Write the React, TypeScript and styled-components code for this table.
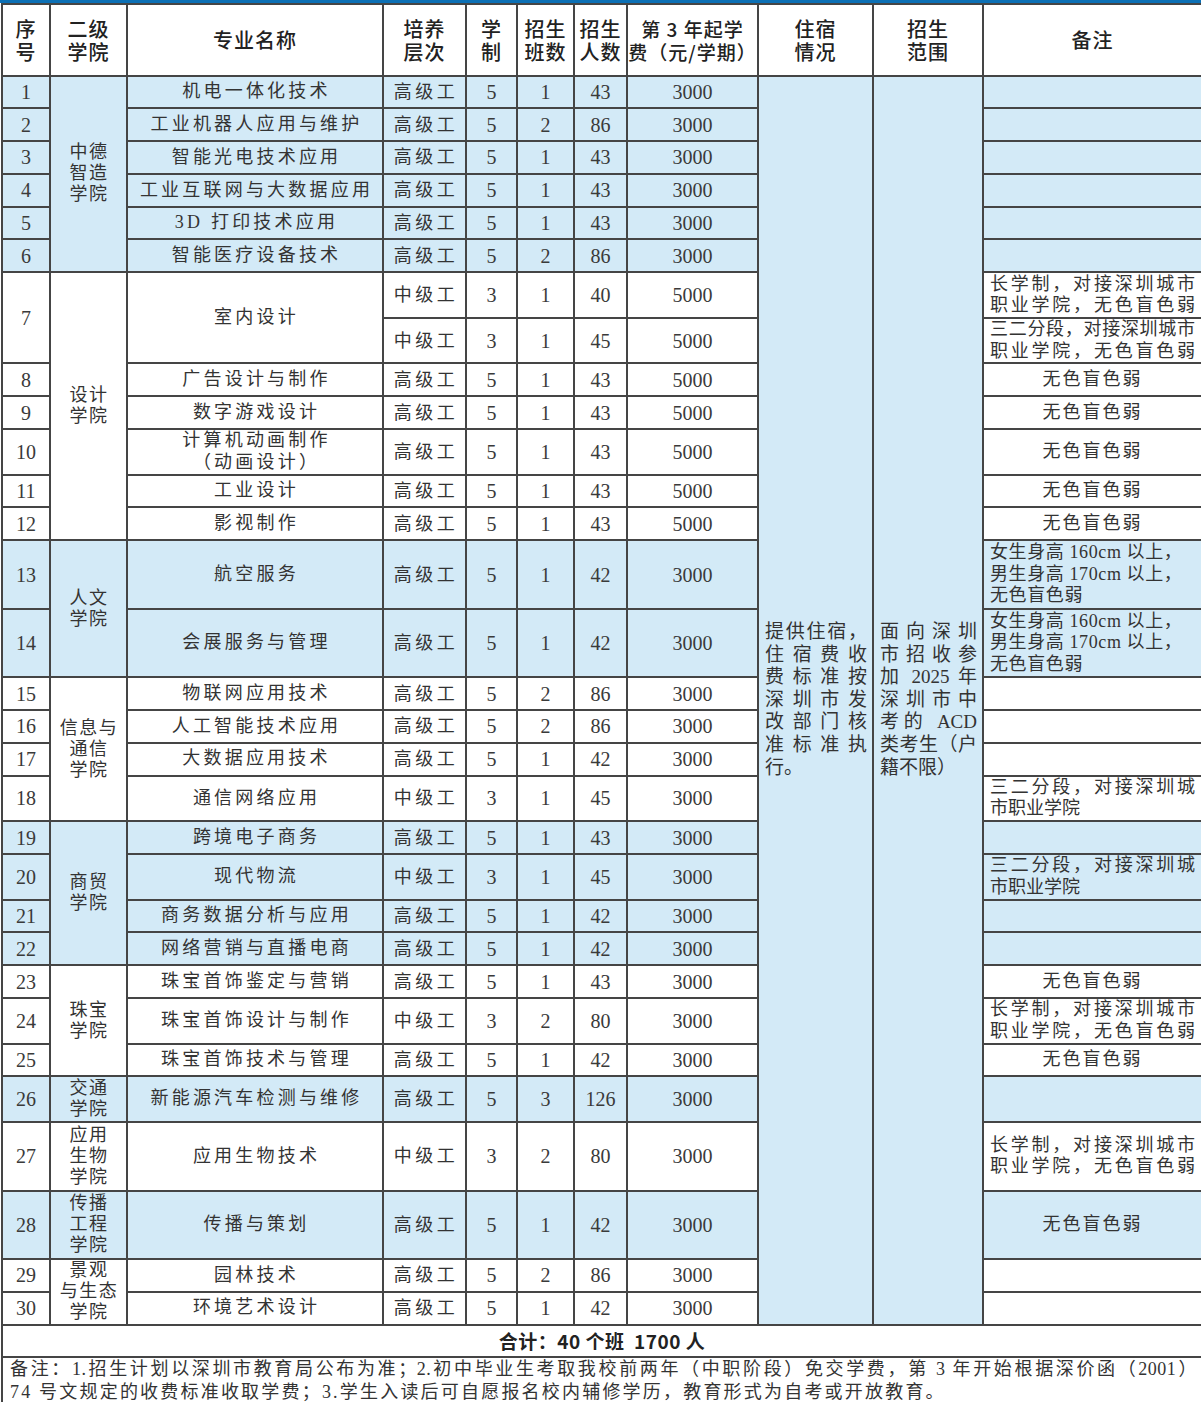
import React from "react";
import styled, { createGlobalStyle } from "styled-components";

const BLUE = "#d3eaf7";
const LINE = "#454545";
const BODY_FONT = `"Liberation Serif", "Noto Sans CJK SC", serif`;
const HEAD_FONT = `"Noto Sans CJK SC", "Noto Sans", sans-serif`;

// 行高
const A = 32.8;
const B = 45.6;
const C = 68.5;

type NoteMode = "center" | "justify" | "left";

type Row = {
  no?: string;
  noSpan?: number;
  name?: string[];
  level: string;
  years: string;
  classes: string;
  people: string;
  fee: string;
  note?: string[];
  noteMode?: NoteMode;
  h: number;
  blue: boolean;
  college?: { lines: string[]; span: number };
};

const NONE = "无色盲色弱";
const LONG = ["长学制，对接深圳城市", "职业学院，无色盲色弱"];
const SEG = ["三二分段，对接深圳城", "市职业学院"];
const HEIGHT = ["女生身高 160cm 以上，", "男生身高 170cm 以上，", NONE];

const r = (
  no: string,
  name: string | string[],
  level: string,
  years: string,
  classes: string,
  people: string,
  fee: string,
  h: number,
  blue: boolean,
  extra: Partial<Row> = {},
): Row => ({
  no,
  name: Array.isArray(name) ? name : [name],
  level,
  years,
  classes,
  people,
  fee,
  h,
  blue,
  ...extra,
});

const rows: Row[] = [
  r("1", "机电一体化技术", "高级工", "5", "1", "43", "3000", A, true, {
    college: { lines: ["中德", "智造", "学院"], span: 6 },
  }),
  r("2", "工业机器人应用与维护", "高级工", "5", "2", "86", "3000", A, true),
  r("3", "智能光电技术应用", "高级工", "5", "1", "43", "3000", A, true),
  r("4", "工业互联网与大数据应用", "高级工", "5", "1", "43", "3000", A, true),
  r("5", "3D 打印技术应用", "高级工", "5", "1", "43", "3000", A, true),
  r("6", "智能医疗设备技术", "高级工", "5", "2", "86", "3000", A, true),
  r("7", "室内设计", "中级工", "3", "1", "40", "5000", B, false, {
    noSpan: 2,
    note: LONG,
    noteMode: "justify",
    college: { lines: ["设计", "学院"], span: 7 },
  }),
  {
    level: "中级工",
    years: "3",
    classes: "1",
    people: "45",
    fee: "5000",
    h: B,
    blue: false,
    note: ["三二分段，对接深圳城市", "职业学院，无色盲色弱"],
    noteMode: "justify",
  },
  r("8", "广告设计与制作", "高级工", "5", "1", "43", "5000", A, false, { note: [NONE] }),
  r("9", "数字游戏设计", "高级工", "5", "1", "43", "5000", A, false, { note: [NONE] }),
  r("10", ["计算机动画制作", "（动画设计）"], "高级工", "5", "1", "43", "5000", B, false, {
    note: [NONE],
  }),
  r("11", "工业设计", "高级工", "5", "1", "43", "5000", A, false, { note: [NONE] }),
  r("12", "影视制作", "高级工", "5", "1", "43", "5000", A, false, { note: [NONE] }),
  r("13", "航空服务", "高级工", "5", "1", "42", "3000", C, true, {
    note: HEIGHT,
    noteMode: "left",
    college: { lines: ["人文", "学院"], span: 2 },
  }),
  r("14", "会展服务与管理", "高级工", "5", "1", "42", "3000", C, true, {
    note: HEIGHT,
    noteMode: "left",
  }),
  r("15", "物联网应用技术", "高级工", "5", "2", "86", "3000", A, false, {
    college: { lines: ["信息与", "通信", "学院"], span: 4 },
  }),
  r("16", "人工智能技术应用", "高级工", "5", "2", "86", "3000", A, false),
  r("17", "大数据应用技术", "高级工", "5", "1", "42", "3000", A, false),
  r("18", "通信网络应用", "中级工", "3", "1", "45", "3000", B, false, {
    note: SEG,
    noteMode: "justify",
  }),
  r("19", "跨境电子商务", "高级工", "5", "1", "43", "3000", A, true, {
    college: { lines: ["商贸", "学院"], span: 4 },
  }),
  r("20", "现代物流", "中级工", "3", "1", "45", "3000", B, true, {
    note: SEG,
    noteMode: "justify",
  }),
  r("21", "商务数据分析与应用", "高级工", "5", "1", "42", "3000", A, true),
  r("22", "网络营销与直播电商", "高级工", "5", "1", "42", "3000", A, true),
  r("23", "珠宝首饰鉴定与营销", "高级工", "5", "1", "43", "3000", A, false, {
    note: [NONE],
    college: { lines: ["珠宝", "学院"], span: 3 },
  }),
  r("24", "珠宝首饰设计与制作", "中级工", "3", "2", "80", "3000", B, false, {
    note: LONG,
    noteMode: "justify",
  }),
  r("25", "珠宝首饰技术与管理", "高级工", "5", "1", "42", "3000", A, false, { note: [NONE] }),
  r("26", "新能源汽车检测与维修", "高级工", "5", "3", "126", "3000", B, true, {
    college: { lines: ["交通", "学院"], span: 1 },
  }),
  r("27", "应用生物技术", "中级工", "3", "2", "80", "3000", C, false, {
    note: LONG,
    noteMode: "justify",
    college: { lines: ["应用", "生物", "学院"], span: 1 },
  }),
  r("28", "传播与策划", "高级工", "5", "1", "42", "3000", C, true, {
    note: [NONE],
    college: { lines: ["传播", "工程", "学院"], span: 1 },
  }),
  r("29", "园林技术", "高级工", "5", "2", "86", "3000", A, false, {
    college: { lines: ["景观", "与生态", "学院"], span: 2 },
  }),
  r("30", "环境艺术设计", "高级工", "5", "1", "42", "3000", A, false),
];

const widths = [48, 77, 256, 83, 51, 57, 53, 131, 115, 110, 219];

const dormLines = ["提供住宿，", "住宿费收", "费标准按", "深圳市发", "改部门核", "准标准执", "行。"];
const scopeLines = ["面向深圳", "市招收参", "加 2025 年", "深圳市中", "考的 ACD", "类考生（户", "籍不限）"];

const GlobalStyle = createGlobalStyle`
  html, body {
    margin: 0;
    padding: 0;
    background: #fff;
  }
  body {
    font-family: ${BODY_FONT};
    color: #333;
  }
`;

const Page = styled.div`
  width: 1201px;
  height: 1402px;
  overflow: hidden;
  background: #fff;
`;

const TopBar = styled.div`
  height: 3px;
  background: #0c70b5;
`;

const Table = styled.table`
  width: 1200px;
  margin-left: 1px;
  border-collapse: collapse;
  table-layout: fixed;
`;

const Tr = styled.tr<{ $h: number }>`
  height: ${p => p.$h}px;
`;

const Th = styled.th<{ $size?: number }>`
  border: 2px solid ${LINE};
  padding: 0;
  font-family: ${HEAD_FONT};
  font-weight: 500;
  font-size: ${p => p.$size ?? 20}px;
  line-height: 23px;
  letter-spacing: 1px;
  color: #222;
  text-align: center;
  vertical-align: middle;
  background: #fff;
  white-space: nowrap;
`;

const Cell = styled.td<{ $blue?: boolean }>`
  border: 2px solid ${LINE};
  padding: 0;
  background: ${p => (p.$blue ? BLUE : "#fff")};
  text-align: center;
  vertical-align: middle;
  overflow: hidden;
`;

const NumCell = styled(Cell)`
  font-size: 20px;
  line-height: 22px;
  color: #3a3a3a;
`;

const NameCell = styled(Cell)`
  font-size: 18px;
  line-height: 21.5px;
  letter-spacing: 3.2px;
  padding-left: 3px;
  white-space: nowrap;
`;

const LevelCell = styled(Cell)`
  font-size: 18px;
  line-height: 22px;
  letter-spacing: 3.5px;
  padding-left: 3px;
  white-space: nowrap;
`;

const CollegeCell = styled(Cell)`
  font-size: 18px;
  line-height: 21px;
  letter-spacing: 1.5px;
  padding-left: 1px;
  white-space: nowrap;
`;

const NoteCell = styled(Cell)<{ $mode: NoteMode }>`
  font-size: 18px;
  line-height: 21.5px;
  letter-spacing: ${p => (p.$mode === "center" ? 2 : p.$mode === "left" ? 0.6 : 0)}px;
  padding: 0 6px;
  text-align: ${p => (p.$mode === "center" ? "center" : "justify")};
`;

const SideCell = styled(Cell)`
  background: ${BLUE};
  font-size: 19px;
  line-height: 22.6px;
  padding: 0 5px 0 6px;
  text-align: justify;
`;

const Line = styled.span<{ $fill?: boolean }>`
  display: block;
  text-align-last: ${p => (p.$fill ? "justify" : "auto")};
`;

const TotalCell = styled(Cell)`
  font-family: ${HEAD_FONT};
  font-weight: 700;
  font-size: 19px;
  line-height: 24px;
  color: #222;
  letter-spacing: 0.5px;
`;

const RemarkCell = styled(Cell)`
  font-size: 18px;
  line-height: 23px;
  padding: 0 4px 0 7px;
  text-align: justify;
  vertical-align: top;
`;

const RemarkLine = styled.span<{ $fill?: boolean }>`
  display: block;
  letter-spacing: ${p => (p.$fill ? 0.5 : 2.2)}px;
  text-align-last: ${p => (p.$fill ? "justify" : "auto")};
`;

const Lines = ({ lines, mode }: { lines: string[]; mode: NoteMode | "plain" }) => (
  <>
    {lines.map((l, i) => (
      <Line key={i} $fill={mode === "justify" && (i < lines.length - 1 || l.length >= 10)}>
        {l}
      </Line>
    ))}
  </>
);

const totalRows = rows.length;

const App = () => {
  return (
    <Page>
      <GlobalStyle />
      <TopBar />
      <Table>
        <colgroup>
          {widths.map((w, i) => (
            <col key={i} style={{ width: w }} />
          ))}
        </colgroup>
        <thead>
          <Tr $h={71.5}>
            <Th>
              序<br />号
            </Th>
            <Th>
              二级<br />学院
            </Th>
            <Th>专业名称</Th>
            <Th>
              培养<br />层次
            </Th>
            <Th>
              学<br />制
            </Th>
            <Th>
              招生<br />班数
            </Th>
            <Th>
              招生<br />人数
            </Th>
            <Th $size={19}>
              第 3 年起学<br />费（元/学期）
            </Th>
            <Th>
              住宿<br />情况
            </Th>
            <Th>
              招生<br />范围
            </Th>
            <Th>备注</Th>
          </Tr>
        </thead>
        <tbody>
          {rows.map((row, i) => (
            <Tr key={i} $h={row.h}>
              {row.no && (
                <NumCell $blue={row.blue} rowSpan={row.noSpan ?? 1}>
                  {row.no}
                </NumCell>
              )}
              {row.college && (
                <CollegeCell $blue={row.blue} rowSpan={row.college.span}>
                  <Lines lines={row.college.lines} mode="plain" />
                </CollegeCell>
              )}
              {row.name && (
                <NameCell $blue={row.blue} rowSpan={row.noSpan ?? 1}>
                  <Lines lines={row.name} mode="plain" />
                </NameCell>
              )}
              <LevelCell $blue={row.blue}>{row.level}</LevelCell>
              <NumCell $blue={row.blue}>{row.years}</NumCell>
              <NumCell $blue={row.blue}>{row.classes}</NumCell>
              <NumCell $blue={row.blue}>{row.people}</NumCell>
              <NumCell $blue={row.blue}>{row.fee}</NumCell>
              {i === 0 && (
                <>
                  <SideCell rowSpan={totalRows}>
                    <Lines lines={dormLines} mode="justify" />
                  </SideCell>
                  <SideCell rowSpan={totalRows}>
                    <Lines lines={scopeLines} mode="justify" />
                  </SideCell>
                </>
              )}
              <NoteCell $blue={row.blue} $mode={row.noteMode ?? "center"}>
                {row.note && <Lines lines={row.note} mode={row.noteMode ?? "center"} />}
              </NoteCell>
            </Tr>
          ))}
          <Tr $h={32}>
            <TotalCell colSpan={11}>合计：40 个班&nbsp;&nbsp;1700 人</TotalCell>
          </Tr>
          <Tr $h={47}>
            <RemarkCell colSpan={11}>
              <RemarkLine $fill>
                备注：1.招生计划以深圳市教育局公布为准；2.初中毕业生考取我校前两年（中职阶段）免交学费，第 3 年开始根据深价函（2001）
              </RemarkLine>
              <RemarkLine>
                74 号文规定的收费标准收取学费；3.学生入读后可自愿报名校内辅修学历，教育形式为自考或开放教育。
              </RemarkLine>
            </RemarkCell>
          </Tr>
        </tbody>
      </Table>
    </Page>
  );
};

export default App;
